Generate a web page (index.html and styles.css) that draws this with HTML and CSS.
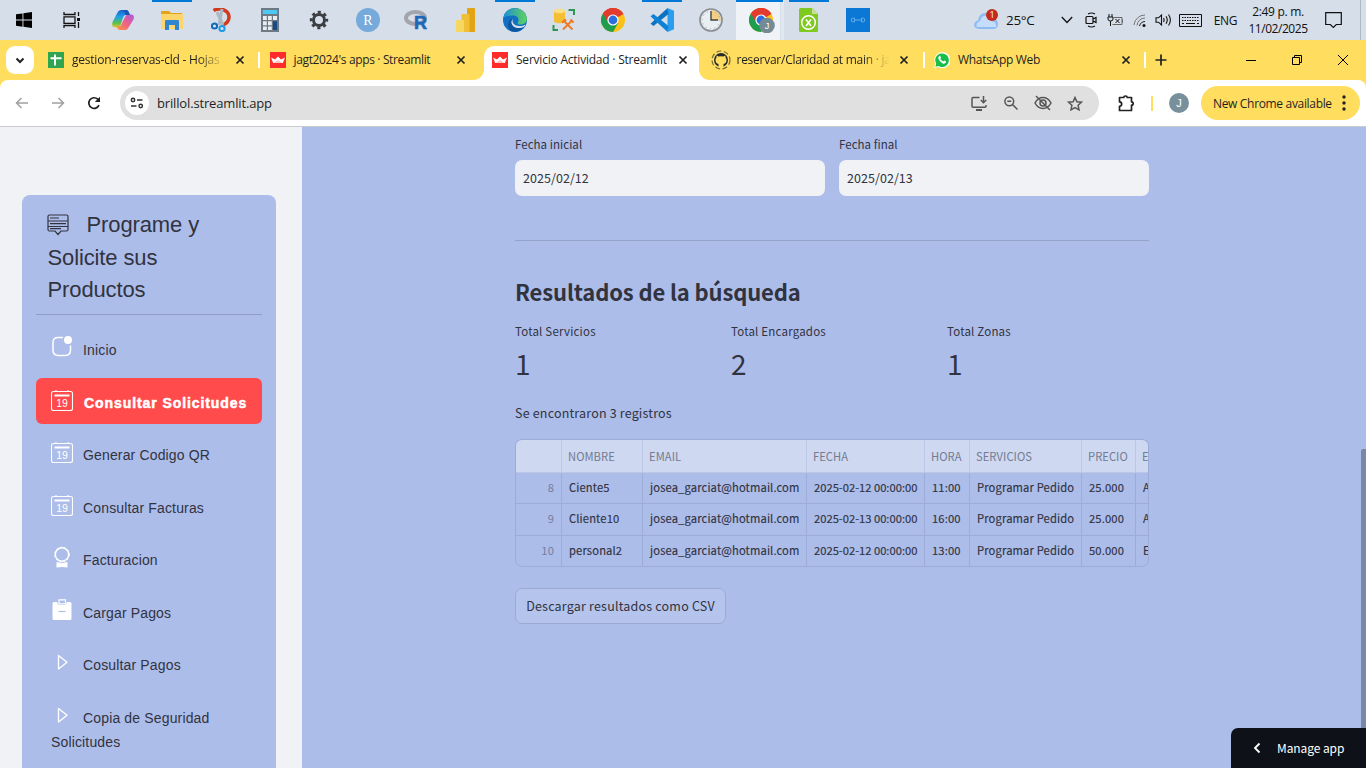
FILE: index.html
```html
<!DOCTYPE html>
<html lang="es">
<head>
<meta charset="utf-8">
<title>Servicio Actividad · Streamlit</title>
<link rel="stylesheet" href="styles.css">
</head>
<body>
<svg class="defs" width="0" height="0">
  <defs>
    <linearGradient id="cp" x1="0" y1="0" x2="0" y2="1"><stop offset="0" stop-color="#1b62c9"/><stop offset=".4" stop-color="#1fa3e8"/><stop offset=".75" stop-color="#5bc04a"/><stop offset="1" stop-color="#e9c62c"/></linearGradient>
    <linearGradient id="cp2" x1="1" y1="0" x2="0" y2="1"><stop offset="0" stop-color="#a65be0"/><stop offset=".5" stop-color="#f0608a"/><stop offset="1" stop-color="#fb9a3c"/></linearGradient>
    <linearGradient id="edge" x1="0" y1="0" x2="1" y2="0"><stop offset="0" stop-color="#1c8fd8"/><stop offset="1" stop-color="#5fd45a"/></linearGradient>
    <symbol id="chrome" viewBox="0 0 24 24">
      <circle cx="12" cy="12" r="12" fill="#fbc116"/>
      <path d="M12 12 1.600 6A12 12 0 0 1 22.400 6z" fill="#e33b2e"/>
      <path d="M1.600 6A12 12 0 0 0 12 24l5.200-9L12 12z" fill="#1f9d4d"/>
      <path d="M12 6h10.400A12 12 0 0 0 2 5.500l4.800 8.500z" fill="#e33b2e"/>
      <circle cx="12" cy="12" r="5.600" fill="#fff"/><circle cx="12" cy="12" r="4.400" fill="#2c6fe0"/>
    </symbol>
    <symbol id="crown" viewBox="0 0 16 16"><path d="M0 0h16v16H0z" fill="#ff2b2b"/><path d="M1 5.500 5 7.500 8 4.500l3 3 4-2-2.200 5.500H3.200z" fill="#fff"/><path d="M3.500 11 8 8l4.500 3z" fill="#ffc0c0"/></symbol>
    <symbol id="x" viewBox="0 0 10 10"><path d="m1.500 1.500 7 7m0-7-7 7" stroke="#202124" stroke-width="1.700"/></symbol>
    <symbol id="cal" viewBox="0 0 22 22"><path d="M2.500 2.500h17q2 0 2 2v15q0 2-2 2h-17q-2 0-2-2v-15q0-2 2-2zM5 1v2M17 1v2" fill="none" stroke="#fff" stroke-width="1.100"/><path d="M3.500 5.500h15v2h-15z" fill="#fff"/><text x="5.200" y="17.500" font-family="Liberation Sans" font-size="10.500" font-weight="400" letter-spacing="0" fill="#fff">19</text></symbol>
    <symbol id="play" viewBox="0 0 22 22"><path d="M7.500 4.500V18L16 11.300z" fill="none" stroke="#fff" stroke-width="1.300" stroke-linejoin="round"/></symbol>
  </defs>
</svg>

<header class="taskbar">
  <div class="apps">
    <span class="app start"><svg width="16" height="16" viewBox="0 0 16 16"><path d="M0 2.300 6.500 1.400v6.200H0zM7.400 1.200 16 0v7.600H7.400zM0 8.500h6.500v6.200L0 13.800zM7.400 8.500H16V16l-8.600-1.200z"/></svg></span>
    <span class="app view"><svg width="18" height="16" viewBox="0 0 18 16" fill="none" stroke="#111" stroke-width="1.300"><path d="M1 0v2.500h11V0M1 4.800h11v6.500H1zM1 16v-2.500h11V16M15.500 0v4M15.500 10v6"/><path d="M14 6h3v3h-3z" fill="#111" stroke="none"/></svg></span>
    <span class="app"><svg width="24" height="24" viewBox="0 0 24 24"><path d="M6.500 4.500Q7.500 2 10 2h5q2 0 2.700 2l1.300 3h-4q-2 0-2.700 2L9.500 17q-.8 2.500-3 2.500H4.500Q0 19.500 1.500 14z" fill="url(#cp)"/><path d="M17.500 19.500Q16.500 22 14 22H9q-2 0-2.700-2L5.500 18.500h2q2 0 2.700-2L14 9q.8-2.500 3-2.500h3q4 0 2.500 5z" fill="url(#cp2)"/><path d="M10 2h5q2 0 2.700 2l1.300 3h-4.500q-1-5-4.500-5z" fill="#1a56b8"/></svg></span>
    <span class="app open"><svg width="22" height="20" viewBox="0 0 22 20"><path d="M0 1.500Q0 1 .5 1H8l2 2h11v16H0z" fill="#e2a31b"/><path d="M0 4h22v15H0z" fill="#fdd66b"/><path d="M4 20V11q0-1 1-1h12q1 0 1 1v9h-4v-5H8v5z" fill="#3285d0"/></svg></span>
    <span class="app"><svg width="20" height="24" viewBox="0 0 20 24" fill="none"><path d="M2.500 2.500C9-1 18 2 18 9c0 4-2.500 6.500-6 8" stroke="#d03b1e" stroke-width="3.500"/><path d="M11 1 8 17M6 4l6 13" stroke="#aeb8c2" stroke-width="3"/><circle cx="3.500" cy="18" r="2.600" stroke="#126bb5" stroke-width="2"/><circle cx="11" cy="20.500" r="2.600" stroke="#1f9be6" stroke-width="2"/></svg></span>
    <span class="app"><svg width="18" height="24" viewBox="0 0 18 24"><path d="M0 0h18v24H0z" fill="#6d7a86"/><path d="M1.800 2h14.400v4H1.800z" fill="#4cc9f3"/><path d="M2 8h3.800v4H2zM7 8h3.800v4H7zM12 8h4v4h-4zM2 13.200h3.800v4H2zM7 13.200h3.800v4H7zM2 18.400h3.800v3.600H2zM7 18.400h3.800v3.600H7z" fill="#e8edf1"/><path d="M12 13.200h4V22h-4z" fill="#174a86"/></svg></span>
    <span class="app"><svg width="20" height="20" viewBox="0 0 20 20" fill="none" stroke="#3b3f44"><circle cx="10" cy="10" r="5.500" stroke-width="3"/><circle cx="10" cy="10" r="7.800" stroke-width="2.800" stroke-dasharray="3.100 3.026" stroke-dashoffset="1.500"/></svg></span>
    <span class="app"><svg width="24" height="24" viewBox="0 0 24 24"><circle cx="12" cy="12" r="12" fill="#75aadb"/><text x="12" y="16.500" text-anchor="middle" font-family="Liberation Serif" font-size="14" fill="#fff">R</text></svg></span>
    <span class="app"><svg width="26" height="24" viewBox="0 -2 26 24"><ellipse cx="11.500" cy="8" rx="9.500" ry="6" fill="none" stroke="#a2a6ac" stroke-width="4"/><text x="10" y="18.500" font-family="Liberation Sans" font-weight="700" font-size="18" fill="#2065b8" stroke="#2065b8" stroke-width=".6">R</text></svg></span>
    <span class="app"><svg width="20" height="24" viewBox="0 0 20 24"><rect x="11" width="8" height="24" rx="1" fill="#e3a414"/><rect x="5.500" y="6" width="8" height="18" rx="1" fill="#efbf35"/><rect y="12" width="8" height="12" rx="1" fill="#f6d75f"/></svg></span>
    <span class="app open"><svg width="24" height="24" viewBox="0 0 24 24"><circle cx="12" cy="12" r="12" fill="#1170c4"/><path d="M.5 9.500C3-2.500 21-3.500 23.800 10c.6 4.500-3 6.500-6.500 6.500-2.500 0-3.300-1-2.300-2.500 2-4.500-2-6.500-5-6.500-4 0-7.500 1-9.500 2z" fill="url(#edge)"/><path d="M9.500 10C7 14 10 20 15.500 20q3.500 0 6-2c-3 5-9 7-13.500 5-5-4-3-11 1.500-13z" fill="#0f55a0"/><path d="M10 10.500c-2 4 2 8 7.500 7.500 2 0 4-.7 5-1.500l-1 2c-7 4-14 0-13-5.500z" fill="#d6dfea"/></svg></span>
    <span class="app"><svg width="24" height="24" viewBox="0 0 24 24"><path d="M2 3v10c0 3 11 3 11 0V3z" fill="#f4bf35"/><ellipse cx="7.500" cy="3" rx="5.500" ry="2.300" fill="#fbdf83"/><path d="M16.500 2H22v5M1.500 17v5H6" fill="none" stroke="#2f9652" stroke-width="2"/><path d="m11.500 12.500 9 9M19.500 13l-8.500 8.500" stroke="#ee7b22" stroke-width="1.900"/><path d="m10 14.500 4-3M18.500 11.500l3 3" stroke="#ee7b22" stroke-width="2.200"/></svg></span>
    <span class="app"><svg width="24" height="24"><use href="#chrome"/></svg></span>
    <span class="app open"><svg width="24" height="24" viewBox="0 0 24 24"><path d="m17.500 0 6.500 2.800v18.400L17.500 24z" fill="#2a9df0"/><path d="m17.500 0 1 6L3.500 18 .5 15.800z" fill="#0f72c0"/><path d="m17.500 24 1-6L3.500 6 .5 8.200z" fill="#0d83d7"/></svg></span>
    <span class="app"><svg width="24" height="24" viewBox="0 0 24 24"><circle cx="12" cy="12" r="11" fill="#e9eef3" stroke="#8b8f93" stroke-width="1.700"/><path d="M12 12V2a10 10 0 0 1 10 10z" fill="#f3cf85"/><path d="M12 3v9h7" fill="none" stroke="#444" stroke-width="1.400"/><circle cx="12" cy="12" r="8.800" fill="none" stroke="#999" stroke-dasharray="1 3.600"/></svg></span>
    <span class="app active"><svg width="26" height="26" viewBox="0 -1 26 26"><use href="#chrome" width="24" height="24"/><circle cx="18" cy="17.500" r="7.800" fill="#748b96"/><text x="18" y="21" text-anchor="middle" font-family="Liberation Sans" font-size="9" fill="#fff">J</text></svg></span>
    <span class="app open"><svg width="20" height="24" viewBox="0 0 20 24"><path d="M1.500 0H13l6 6v16.500q0 1.500-1.500 1.500h-16Q0 24 0 22.500v-21Q0 0 1.500 0z" fill="#80c920"/><path d="m13 0 6 6h-6z" fill="#c5de9a"/><circle cx="9.500" cy="14.500" r="6.800" fill="none" stroke="#fff" stroke-width="1.500"/><path d="m7 11.500 5 6.500m0-6.500-5 6.500" stroke="#fff" stroke-width="1.600"/></svg></span>
    <span class="app"><svg width="24" height="24" viewBox="0 0 24 24"><path d="M0 0h24v24H0z" fill="#0a78d4"/><path d="M9 12h6M6.500 10.200h2v3.600h-2q-1.200 0-1.200-1.800t1.200-1.800zm11 0h-2v3.600h2q1.200 0 1.200-1.800t-1.200-1.800z" fill="none" stroke="#7fbdf0" stroke-width=".8"/></svg></span>
  </div>
  <div class="tray">
    <span class="weather"><svg width="25" height="22" viewBox="0 0 25 22"><path d="M5 20Q0 19.500 0 16t4-4.500Q5 4 11 4t7 6q6 0 6 5t-5 5z" fill="#8fbdf3"/><path d="M3 18q-2-4 3-6 2-6 6-5 5 1 5 5 6 1 5 6z" fill="#c5ddfa"/><circle cx="18" cy="6" r="6" fill="#c42b1c"/><text x="18" y="9.200" text-anchor="middle" font-family="Open Sans" font-size="9" fill="#fff">1</text></svg><span>25°C</span></span>
    <span class="chev"><svg width="12" height="8" viewBox="0 0 12 8"><path d="m.8 1 5.200 5.500L11.200 1" fill="none" stroke="#111" stroke-width="1.300"/></svg></span>
    <span class="t24"><svg width="13" height="16" viewBox="0 0 13 16" fill="none" stroke="#111" stroke-width="1.200"><path d="M3 2q3.500-2 7 0M3 14q3.500 2 7 0M2 4.500h5q1 0 1 1v5q0 1-1 1H2q-1 0-1-1v-5q0-1 1-1zM8 7l3-1.500v5L8 9"/></svg></span>
    <span class="t24"><svg width="17" height="13" viewBox="0 0 17 13" fill="none" stroke="#111"><path d="M2 0v3M5 0v3M1 3h5v2Q6 7 3.500 7 1 7 1 5zM3.500 7v5"/><path d="M7 3.500h8v7H5.500M15.500 5.500v3" stroke="#666"/><path d="m8.500 5 4 4m0-4-4 4"/></svg></span>
    <span class="t25"><svg width="13" height="14" viewBox="0 0 13 14" fill="none"><path d="M1 12A11 11 0 0 1 12 2M4 12.500a8 8 0 0 1 8-7.500" stroke="#777"/><path d="M6.500 13A6 6 0 0 1 12 8.500" stroke="#222"/><circle cx="11" cy="12.500" r="1.500" fill="#111"/></svg></span>
    <span class="t22"><svg width="17" height="14" viewBox="0 0 17 14" fill="none" stroke="#111" stroke-width="1.100"><path d="M1 4.800h2.500L6.500 2v10L3.500 9.200H1zM8.500 5q1.200 2 0 4M11 3.200q2.500 3.800 0 7.600M13.500 1.500q3.800 5.500 0 11"/></svg></span>
    <span class="t28"><svg width="23" height="13" viewBox="0 0 23 13" fill="none" stroke="#111"><path d="M.5.500h22v12H.5z"/><path d="M3 3.500h17M3 6.500h17" stroke-dasharray="1.500 1"/><path d="M3 9.500h2M7 9.500h9M18 9.500h2"/></svg></span>
    <span class="lang">ENG</span>
    <span class="clock"><span class="c1">2:49 p. m.</span><span class="c2">11/02/2025</span></span>
    <span class="notif"><svg width="17" height="17" viewBox="0 0 17 17"><path d="M.7.700h15.600v11.800h-5l-3 3-3-3H.7z" fill="none" stroke="#111" stroke-width="1.200"/></svg></span>
  </div>
</header>

<div class="strip">
  <span class="tabmenu"><svg width="10" height="7" viewBox="0 0 10 7"><path d="m1.500 1.500 3.500 3.500 3.500-3.500" fill="none" stroke="#222" stroke-width="2"/></svg></span>
  <div class="tab sep"><svg width="16" height="16" viewBox="0 0 16 16"><path d="M0 0h16v16H0z" fill="#30a550"/><path d="M7 2.500v11M2.500 6.200h11" stroke="#fff" stroke-width="2"/></svg><span class="title fade s1">gestion-reservas-cld - Hojas</span><svg class="close" width="10" height="10"><use href="#x"/></svg></div>
  <div class="tab"><svg width="16" height="16"><use href="#crown"/></svg><span class="title s2">jagt2024's apps · Streamlit</span><svg class="close" width="10" height="10"><use href="#x"/></svg></div>
  <div class="tab current"><svg width="16" height="16"><use href="#crown"/></svg><span class="title s3">Servicio Actividad · Streamlit</span><svg class="close" width="10" height="10"><use href="#x"/></svg></div>
  <div class="tab sep"><svg class="gh" width="20" height="20" viewBox="0 0 20 20"><circle cx="10" cy="10" r="9" fill="none" stroke="#76683c" stroke-width="1.200" stroke-dasharray="5 2.500"/><circle cx="10" cy="10" r="7" fill="#24292f"/><path d="M7.500 17v-3q-3-.5-3-4 0-1.500 1-2.500l.1-2 2 1q2.400-.7 4.800 0l2-1 .1 2q1 1 1 2.500 0 3.500-3 4v3z" fill="#ffdd5e"/></svg><span class="title fade s4">reservar/Claridad at main · ja</span><svg class="close" width="10" height="10"><use href="#x"/></svg></div>
  <div class="tab sep"><svg width="16" height="16" viewBox="0 0 16 16"><path d="m0 16 1.200-4.300A8 8 0 1 1 4.200 15z" fill="#fff"/><path d="m1.300 14.700.9-3A6.800 6.800 0 1 1 4.500 14z" fill="#17bf49"/><path d="M5 4.200q1-.8 1.500.3l.5 1.200-.7 1q1 2 3 2.800l.9-1 1.600.8q.5.300.1 1.200-1 1.700-3.200.9Q5.500 10 4.300 6.500q-.2-1.500.7-2.300z" fill="#fff"/></svg><span class="title s5">WhatsApp Web</span><svg class="close" width="10" height="10"><use href="#x"/></svg></div>
  <span class="newtab"><svg width="12" height="12" viewBox="0 0 12 12"><path d="M6 .5v11M.5 6h11" stroke="#222" stroke-width="1.700"/></svg></span>
  <span class="winbtns">
    <svg width="10" height="10" viewBox="0 0 10 10"><path d="M0 5.500h10" stroke="#000"/></svg>
    <svg width="10" height="10" viewBox="0 0 10 10"><path d="M.5 2.500h7v7h-7zM2.500 2.500v-2h7v7h-2" fill="none" stroke="#000"/></svg>
    <svg width="10" height="10" viewBox="0 0 10 10"><path d="m0 0 10 10M10 0 0 10" stroke="#000"/></svg>
  </span>
</div>

<div class="toolbar">
  <span class="nav"><svg width="14" height="12" viewBox="0 0 14 12"><path d="M13 6H1.500M6.500 1l-5 5 5 5" fill="none" stroke="#a0a0a0" stroke-width="1.500"/></svg></span>
  <span class="nav"><svg width="14" height="12" viewBox="0 0 14 12"><path d="M1 6h11.500M7.500 1l5 5-5 5" fill="none" stroke="#a0a0a0" stroke-width="1.500"/></svg></span>
  <span class="nav"><svg width="14" height="14" viewBox="0 0 14 14"><path d="M12 9.200A5.300 5.300 0 1 1 10.800 3.200L12.500 5" fill="none" stroke="#222" stroke-width="1.700"/><path d="M13 .8V6H7.800z" fill="#222"/></svg></span>
  <div class="omni">
    <span class="site"><svg width="14" height="12" viewBox="0 0 14 12" fill="none" stroke="#333" stroke-width="1.500"><circle cx="3" cy="3" r="1.700"/><path d="M7 3h5.500M1 9h5.500"/><circle cx="10.700" cy="9" r="1.700"/></svg></span>
    <span class="url">brillol.streamlit.app</span>
    <span class="oi"><svg width="17" height="15" viewBox="0 0 17 15" fill="none" stroke="#555" stroke-width="1.500"><path d="M8.500 1.500H2q-1 0-1 1v7.800q0 1 1 1h12q1 0 1-1V9M12.500 0v6M9.800 4l2.700 2.700L15.200 4"/><path d="M5 13h6v2H5z" fill="#555" stroke="none"/></svg></span>
    <span class="oi"><svg width="14" height="14" viewBox="0 0 14 14" fill="none" stroke="#555" stroke-width="1.500"><circle cx="5.300" cy="5.300" r="4.400"/><path d="m8.500 8.500 5 5M3.300 5.300h4"/></svg></span>
    <span class="oi"><svg width="18" height="16" viewBox="0 0 18 16" fill="none" stroke="#555" stroke-width="1.500"><path d="M1 8q3-5.500 8-5.500T17 8q-3 5.500-8 5.500T1 8z"/><circle cx="9" cy="8" r="3"/><path d="m2 1 14 14"/></svg></span>
    <span class="oi"><svg width="16" height="15" viewBox="0 0 16 15"><path d="m8 1.500 1.900 4.200 4.600.5-3.400 3.100.9 4.500-4-2.300-4 2.300.9-4.500L1.500 6.200l4.600-.5z" fill="none" stroke="#555" stroke-width="1.500"/></svg></span>
  </div>
  <span class="ext"><svg width="17" height="17" viewBox="0 0 17 17"><path d="M1.500 2.500h4.300q0-1.500 1.700-1.500t1.700 1.500h4.300v4.300q1.700 0 1.700 1.700t-1.700 1.700v5.300h-12v-4.200q2.200 0 2.200-2.200T1.500 6.800z" fill="none" stroke="#222" stroke-width="1.700" stroke-linejoin="round"/></svg></span>
  <span class="bar"></span>
  <span class="avatar">J</span>
  <span class="update"><span>New Chrome available</span><svg width="4" height="16" viewBox="0 0 4 16" fill="#222"><circle cx="2" cy="2" r="1.700"/><circle cx="2" cy="8" r="1.700"/><circle cx="2" cy="14" r="1.700"/></svg></span>
</div>

<div class="page">
  <aside class="side">
    <nav class="menu">
      <div class="menu-title"><svg width="22" height="22" viewBox="0 0 22 22" fill="none" stroke="#31333f" stroke-width="1.200"><path d="M2.500 1h17Q21 1 21 2.500v13q0 1.500-1.500 1.500H14l-3 3.500L8 17H2.500Q1 17 1 15.500v-13Q1 1 2.500 1zM3 4h9M1 7h20M3 9.700h16M1 12.500h20M3 14.700h11"/></svg>Programe y Solicite sus Productos</div>
      <div class="item"><svg width="22" height="22" viewBox="0 0 22 22"><path d="M12 1.500H7Q2 1.500 2 6.500V14q0 5.500 5.500 5.500H14q5.500 0 5.500-5.500V9.500" fill="none" stroke="#fff" stroke-width="1.500"/><circle cx="17" cy="4" r="4" fill="#fff"/></svg>Inicio</div>
      <div class="item on"><svg width="22" height="22"><use href="#cal"/></svg>Consultar Solicitudes</div>
      <div class="item"><svg width="22" height="22"><use href="#cal"/></svg>Generar Codigo QR</div>
      <div class="item"><svg width="22" height="22"><use href="#cal"/></svg>Consultar Facturas</div>
      <div class="item"><svg width="22" height="22" viewBox="0 0 22 22"><circle cx="11" cy="8.500" r="6.700" fill="none" stroke="#fff" stroke-width="1.500"/><circle cx="11" cy="8.500" r="7.300" fill="none" stroke="#fff" stroke-dasharray="2 2"/><path d="m5.500 16 5.500 1 5.500-1v5.500L11 21l-5.500.5z" fill="#fff"/></svg>Facturacion</div>
      <div class="item"><svg width="22" height="22" viewBox="0 0 22 22"><path d="M3 3h3l1.500 3h7L16 3h3q1.500 0 1.500 1.500v15Q20.500 21 19 21H3q-1.500 0-1.500-1.500v-15Q1.500 3 3 3z" fill="#fff"/><path d="M8 .8h6.500v4H8z" fill="#adbdea" stroke="#fff" stroke-width="1.200"/><path d="M7.500 12.500h7" stroke="#adbdea" stroke-width="1.200"/></svg>Cargar Pagos</div>
      <div class="item"><svg width="22" height="22"><use href="#play"/></svg>Cosultar Pagos</div>
      <div class="item"><svg width="22" height="22"><use href="#play"/></svg>Copia de Seguridad Solicitudes</div>
    </nav>
  </aside>
  <main class="main">
    <div class="content">
      <div class="dates">
        <label class="field"><span>Fecha inicial</span><span class="input">2025/02/12</span></label>
        <label class="field"><span>Fecha final</span><span class="input">2025/02/13</span></label>
      </div>
      <hr class="rule">
      <h3 class="heading">Resultados de la búsqueda</h3>
      <div class="metrics">
        <div><div class="ml">Total Servicios</div><div class="mv">1</div></div>
        <div><div class="ml">Total Encargados</div><div class="mv">2</div></div>
        <div><div class="ml">Total Zonas</div><div class="mv">1</div></div>
      </div>
      <p class="found">Se encontraron 3 registros</p>
      <div class="grid">
        <div class="row head"><span></span><span>NOMBRE</span><span>EMAIL</span><span>FECHA</span><span>HORA</span><span>SERVICIOS</span><span>PRECIO</span><span>E</span></div>
        <div class="row"><span>8</span><span>Ciente5</span><span>josea_garciat@hotmail.com</span><span class="dt">2025-02-12 00:00:00</span><span>11:00</span><span>Programar Pedido</span><span>25.000</span><span>A</span></div>
        <div class="row"><span>9</span><span>Cliente10</span><span>josea_garciat@hotmail.com</span><span class="dt">2025-02-13 00:00:00</span><span>16:00</span><span>Programar Pedido</span><span>25.000</span><span>A</span></div>
        <div class="row"><span>10</span><span>personal2</span><span>josea_garciat@hotmail.com</span><span class="dt">2025-02-12 00:00:00</span><span>13:00</span><span>Programar Pedido</span><span>50.000</span><span>E</span></div>
      </div>
      <button class="csv">Descargar resultados como CSV</button>
    </div>
    <span class="scroll"></span>
    <div class="manage"><svg width="8" height="12" viewBox="0 0 8 12"><path d="M6.500 1.500 2 6l4.500 4.500" fill="none" stroke="#fff" stroke-width="1.800"/></svg><span>Manage app</span></div>
  </main>
</div>
</body>
</html>
```
FILE: styles.css
```css
* { box-sizing: border-box; }
body { margin: 0; width: 1366px; height: 768px; overflow: hidden; display: flex; flex-direction: column; font-family: "Open Sans", "Noto Sans", sans-serif; color: #1f1f1f; }
svg { display: block; flex: none; }
.defs { position: absolute; }

.taskbar { height: 40px; flex: none; display: flex; justify-content: space-between; background: #d6dee9; }
.apps { display: flex; }
.app { width: 49px; height: 40px; display: flex; align-items: center; justify-content: center; padding-right: 1px; }
.start, .view { width: 48px; padding: 0; }
.view { margin-right: 3px; }
.open { background: linear-gradient(#0078d7, #0078d7) 4px 0 / 40px 2px no-repeat; }
.active { background: linear-gradient(#0078d7, #0078d7) 0 0 / 47px 2px no-repeat, linear-gradient(#eff3f7, #eff3f7) 0 0 / 44px 40px no-repeat, linear-gradient(#e1e8f0, #e1e8f0) 45px 0 / 3px 40px no-repeat; padding-left: 3px; }
.tray { display: flex; width: 392px; align-items: center; font-size: 13px; color: #111; border-right: 5px solid #d6dee9; box-shadow: inset -1px 0 #aeb8c2; letter-spacing: -.3px; }
.tray > span { display: flex; justify-content: center; align-items: center; flex: none; }
.tray .weather { width: 81px; gap: 7px; justify-content: flex-start; padding-bottom: 1px; }
.weather span { font-size: 13.500px; }
.chev { width: 24px; }
.t24 { width: 24px; }
.t25 { width: 25px; }
.t22 { width: 22px; }
.t28 { width: 32px; }
.lang { width: 39px; font-size: 12px; }
.tray .clock { width: 66px; flex-direction: column; font-size: 12px; line-height: 17px; padding-bottom: 1px; }
.c1 { letter-spacing: -.3px; }
.c2 { letter-spacing: -.45px; }
.notif { width: 44px; }

.strip { height: 40px; flex: none; display: flex; align-items: center; background: #ffdd5e; padding-left: 6px; }
.tabmenu { width: 28px; height: 28px; border-radius: 9px; background: #fff; display: flex; align-items: center; justify-content: center; margin-right: 6px; }
.tab { width: 221.500px; height: 40px; padding-left: 8px; display: flex; align-items: center; position: relative; font-size: 12px; flex: none; }
.title { width: 152px; margin-left: 8px; white-space: nowrap; line-height: 18px; }
.fade { -webkit-mask-image: linear-gradient(90deg, #000 125px, transparent 153px); mask-image: linear-gradient(90deg, #000 125px, transparent 153px); }
.close { margin-left: 10.500px; }
.gh { margin: 0 -2px; }
.s1 { letter-spacing: -.22px; }
.s2 { letter-spacing: -.36px; }
.s3 { letter-spacing: -.22px; }
.s4 { letter-spacing: -.26px; }
.s5 { letter-spacing: -.3px; }
.sep { background: linear-gradient(#fff, #fff) 218px 12px / 2px 16px no-repeat; }
.current { z-index: 1; left: 1px; }
.current .close { margin-left: 9.500px; }
.current::before { content: ""; position: absolute; z-index: -1; left: 0; top: 6px; width: 215px; height: 34px; border-radius: 10px 10px 0 0; background: #fff; }
.current::after { content: ""; position: absolute; left: -10px; top: 30px; width: 235px; height: 10px; background: radial-gradient(circle at 0 0, transparent 9.500px, #fff 10px) 0 0 / 10px 10px no-repeat, radial-gradient(circle at 100% 0, transparent 9.500px, #fff 10px) 225px 0 / 10px 10px no-repeat; }
.newtab { margin-left: 7.500px; }
.winbtns { margin-left: auto; display: flex; gap: 36px; padding-right: 18px; }

.toolbar { height: 46px; flex: none; display: flex; align-items: center; background: #fff; border-radius: 8px 8px 0 0; padding-left: 4px; position: relative; }
.toolbar::before { content: ""; position: absolute; inset: 0 0 30px; z-index: -1; background: #ffdd5e; }
.nav { width: 36px; display: flex; justify-content: center; }
.omni { margin-left: 8px; width: 979px; height: 34px; border-radius: 17px; background: #e0e0e0; display: flex; align-items: center; padding: 0 8px 0 5px; }
.site { width: 24px; height: 24px; border-radius: 50%; background: #fff; display: flex; align-items: center; justify-content: center; }
.url { margin-left: 8px; flex: 1; font-size: 13px; letter-spacing: -.15px; }
.oi { width: 32px; display: flex; justify-content: center; }
.ext { width: 52px; display: flex; justify-content: center; padding-left: 2px; }
.bar { width: 2px; height: 15px; background: #ffdd5e; }
.avatar { width: 20px; height: 20px; margin-left: 16px; border-radius: 50%; background: #78909c; color: #fff; font: 11px/20px "Liberation Sans", sans-serif; text-align: center; }
.update { width: 159px; height: 34px; margin-left: 12px; border-radius: 17px; background: #ffdd5e; display: flex; align-items: center; justify-content: space-between; padding: 0 14px 0 12px; font-size: 12px; letter-spacing: -.33px; white-space: nowrap; }

.page { flex: 1; min-height: 0; display: flex; border-top: 1px solid #c9cbcf; color: #31333f; }
.side { width: 302px; background: #f0f2f6; padding: 68px 26px 0 22px; overflow: hidden; }
.menu { background: #adbdea; border-radius: 8px; height: 620px; padding: 14px 14px 0; display: flex; flex-direction: column; gap: 6.500px; font-family: "Liberation Sans", Arial, sans-serif; }
.menu-title { font-size: 22px; line-height: 32.500px; height: 106px; padding: 0 40px 0 11.500px; border-bottom: 1px solid #8f9dc8; margin-bottom: 4px; letter-spacing: -.12px; }
.menu-title svg { display: inline-block; vertical-align: -4px; margin: 0 18px 0 -1px; }
.item { font-size: 14px; line-height: 24px; letter-spacing: .15px; min-height: 46px; padding: 12.500px 15px 0; border-radius: 6px; flex: none; }
.item svg { display: inline-block; vertical-align: -3px; margin: -8px 10px 0 0; }
.on { background: #ff4b4b; color: #fff; font-weight: 700; letter-spacing: .92px; -webkit-text-stroke: .5px #fff; white-space: nowrap; }
.on svg { -webkit-text-stroke: 0; margin-right: 11px; }

.main { flex: 1; background: #adbdea; position: relative; font-family: "Noto Sans CJK SC", sans-serif; }
.content { width: 634px; margin-left: 213px; padding-top: 7px; }
.dates { display: grid; grid-template-columns: 310px 310px; gap: 14px; }
.field { font-size: 11.500px; line-height: 20px; letter-spacing: .05px; display: flex; flex-direction: column; gap: 6px; }
.input { height: 36px; border-radius: 7px; background: #f0f2f6; padding: 0 8px; font-size: 12.500px; line-height: 36px; }
.rule { margin: 44px 0 0; border: 0; height: 1px; background: #95a2c9; }
.heading { margin: 33px 0 0; font-size: 22px; line-height: 34px; font-weight: 600; letter-spacing: -.13px; }
.metrics { display: grid; grid-template-columns: repeat(3, 202px); gap: 14px; margin-top: 13px; }
.ml { font-size: 11.500px; line-height: 20px; letter-spacing: .2px; }
.mv { font-size: 28px; line-height: 44px; }
.found { margin: 18px 0 0; font-size: 12.500px; line-height: 20px; letter-spacing: .18px; }
.grid { margin-top: 16px; border: 1px solid #9dabd7; border-radius: 7px; overflow: hidden; height: 128px; font-size: 11.200px; -webkit-text-stroke: .15px; }
.row { display: grid; grid-template-columns: 46px 81px 164px 118px 45px 112px 54px 40px; height: 31.500px; line-height: 29px; }
.row > span { border-right: 1px solid #9dabd7; border-bottom: 1px solid #9dabd7; padding-left: 7px; white-space: nowrap; overflow: hidden; letter-spacing: .14px; }
.row > .dt { letter-spacing: 0; }
.row > span:first-child { text-align: right; padding-right: 7px; color: #737da0; -webkit-text-stroke: 0; }
.row.head { height: 32.500px; line-height: 32px; background: #ced8f1; color: #727b92; -webkit-text-stroke: 0; }
.row.head > span { border-color: #bcc7e6; padding-left: 6px; letter-spacing: .05px; }
.csv { display: block; margin: 21px 0 0; width: 211px; height: 36px; border: 1px solid #9caad2; border-radius: 7px; background: #b5c4ec; color: #31333f; font: 12.500px/20px "Noto Sans CJK SC", sans-serif; letter-spacing: .2px; padding: 0; white-space: nowrap; }
.scroll { position: absolute; right: 0; top: 322px; width: 5px; height: 330px; background: #7c87a8; border-radius: 2px 0 0 0; }
.manage { position: absolute; right: 0; bottom: 0; width: 135px; height: 40px; background: #0e1117; color: #fff; border-radius: 7px 0 0 0; display: flex; align-items: center; gap: 16px; padding: 0 0 1px 22px; font-size: 12px; line-height: 18px; letter-spacing: -.08px; white-space: nowrap; }
```
